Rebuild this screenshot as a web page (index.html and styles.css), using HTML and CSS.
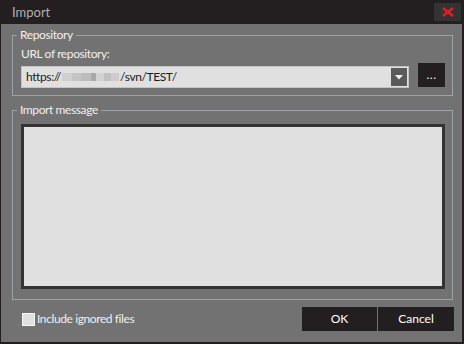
FILE: index.html
```html
<!DOCTYPE html>
<html>
<head>
<meta charset="utf-8">
<link rel="stylesheet" href="styles.css">
</head>
<body>
<div class="window">
  <div class="titlebar">
    <span class="title">Import</span>
    <button class="close" aria-label="Close">
      <svg width="12" height="10" viewBox="0 0 12 10"><path d="M1 1 L11 9 M11 1 L1 9" stroke="#e81b23" stroke-width="2.4" fill="none"/></svg>
    </button>
  </div>
  <div class="content">
    <fieldset class="group repo">
      <legend>Repository</legend>
      <div class="label">URL of repository:</div>
      <div class="url-row">
        <div class="combo">
          <span class="url">https://<span class="blur"><i class="b1"></i><i class="b2"></i><i class="b3"></i><i class="b4"></i><i class="b5"></i><i class="b6"></i><i class="b7"></i></span>/svn/TEST/</span>
          <span class="drop"><svg width="8" height="5" viewBox="0 0 8 5"><path d="M0 0 H8 L4 4.5 Z" fill="#f2f2f2"/></svg></span>
        </div>
        <button class="browse">...</button>
      </div>
    </fieldset>
    <fieldset class="group msg">
      <legend>Import message</legend>
      <div class="textarea"></div>
    </fieldset>
    <div class="bottom">
      <label class="check"><span class="box"></span>Include ignored files</label>
      <div class="buttons">
        <button class="btn">OK</button>
        <button class="btn cancel">Cancel</button>
      </div>
    </div>
  </div>
</div>
</body>
</html>
```
FILE: styles.css
```css
html, body {
  margin: 0;
  padding: 0;
  background: #231f20;
}
body {
  font-family: Lato, "Noto Sans", sans-serif;
  font-size: 12px;
  line-height: 16px;
  letter-spacing: -0.4px;
  color: #f0f0f0;
}
.window {
  width: 464px;
  height: 344px;
  box-sizing: border-box;
  background: #727272;
  border-left: 1px solid #231f20;
  border-right: 2px solid #231f20;
  border-bottom: 2px solid #231f20;
  display: flex;
  flex-direction: column;
}
.titlebar {
  height: 24px;
  background: #231f20;
  display: flex;
  align-items: flex-start;
  justify-content: space-between;
  flex: none;
}
.title {
  color: #b0b0b0;
  font-size: 13px;
  letter-spacing: 0;
  padding: 4px 0 0 11px;
}
.close {
  width: 27px;
  height: 18px;
  margin: 3px 1px 0 0;
  padding: 0;
  border: 0;
  background: #333333;
  display: flex;
  align-items: center;
  justify-content: center;
}
.content {
  flex: 1;
  padding: 3px 8px 0 11px;
  display: flex;
  flex-direction: column;
}
.group {
  margin: 0 1px 0 0;
  border: 1px solid #9da2a7;
  padding: 3px 7px 7px 8px;
  min-width: 0;
}
.group legend {
  padding: 0 3px;
  margin-left: -4px;
  line-height: 16px;
}
.label {
  height: 16px;
  margin-bottom: 1px;
}
.url-row {
  display: flex;
  gap: 9px;
}
.combo {
  flex: 1;
  height: 22px;
  margin-top: 3px;
  box-sizing: border-box;
  background: #e0e0e0;
  border: 1px solid #c4c4c4;
  display: flex;
  align-items: center;
  justify-content: space-between;
  color: #1a1a1a;
}
.url {
  padding-left: 4px;
  display: flex;
  align-items: center;
  white-space: nowrap;
}
.blur {
  display: inline-flex;
  align-items: center;
  height: 9px;
  margin: 0 1px 0 1px;
}
.blur i {
  display: block;
  height: 8px;
}
.b1 { width: 10px; background: #cfcfcf; }
.b2 { width: 9px; background: #c4c4c4; }
.b3 { width: 10px; background: #bdbdbd; }
.b4 { width: 5px; background: #a8a8a8; }
.b5 { width: 8px; background: #d2d2d2; }
.b6 { width: 7px; background: #c0c0c0; }
.b7 { width: 8px; background: #cccccc; }
.drop {
  width: 16px;
  height: 18px;
  margin-right: 1px;
  background: #5b5b5b;
  display: flex;
  align-items: center;
  justify-content: center;
}
.browse {
  width: 27px;
  height: 24px;
  padding: 0;
  border: 0;
  background: #231f20;
  color: #f4f4f4;
  font: inherit;
  font-size: 12px;
  letter-spacing: 0.5px;
}
.msg {
  margin-top: 6px;
  padding-top: 6px;
  padding-bottom: 10px;
}
.textarea {
  height: 165px;
  box-sizing: border-box;
  background: #e0e0e0;
  border: 3px solid #333333;
}
.bottom {
  display: flex;
  justify-content: space-between;
  align-items: center;
  margin-top: 7px;
  padding-left: 10px;
}
.check {
  display: flex;
  align-items: center;
  gap: 2px;
}
.box {
  width: 11px;
  height: 11px;
  background: #e0e0e0;
  border: 1px solid #f8f8f8;
}
.buttons {
  display: flex;
  gap: 1px;
}
.btn {
  width: 75px;
  height: 24px;
  padding: 0;
  border: 0;
  background: #231f20;
  color: #ffffff;
  font: inherit;
}
.cancel {
  width: 76px;
}
```
